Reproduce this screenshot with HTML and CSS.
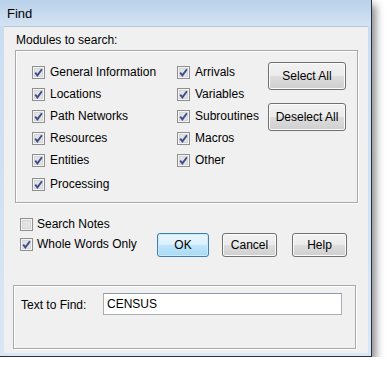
FILE: index.html
```html
<!DOCTYPE html>
<html lang="en">
<head>
  <meta charset="UTF-8" />
  <title>Find</title>
  <link rel="stylesheet" href="styles.css">
</head>
<body>
  <div class="window">
    <div class="titlebar">Find</div>

    <div class="client">
      <div class="group-label">Modules to search:</div>

      <div class="group modules">
        <div class="col col-a">
          <label class="check"><svg class="box" viewBox="0 0 13 13"><rect x="0.5" y="0.5" width="12" height="12" class="b-out"/><rect x="2.5" y="2.5" width="8" height="8" class="b-in"/><path d="M3.2 6.6 L5.4 9.4 L9.9 3.2" class="tick"/></svg>General Information</label>
          <label class="check"><svg class="box" viewBox="0 0 13 13"><rect x="0.5" y="0.5" width="12" height="12" class="b-out"/><rect x="2.5" y="2.5" width="8" height="8" class="b-in"/><path d="M3.2 6.6 L5.4 9.4 L9.9 3.2" class="tick"/></svg>Locations</label>
          <label class="check"><svg class="box" viewBox="0 0 13 13"><rect x="0.5" y="0.5" width="12" height="12" class="b-out"/><rect x="2.5" y="2.5" width="8" height="8" class="b-in"/><path d="M3.2 6.6 L5.4 9.4 L9.9 3.2" class="tick"/></svg>Path Networks</label>
          <label class="check"><svg class="box" viewBox="0 0 13 13"><rect x="0.5" y="0.5" width="12" height="12" class="b-out"/><rect x="2.5" y="2.5" width="8" height="8" class="b-in"/><path d="M3.2 6.6 L5.4 9.4 L9.9 3.2" class="tick"/></svg>Resources</label>
          <label class="check"><svg class="box" viewBox="0 0 13 13"><rect x="0.5" y="0.5" width="12" height="12" class="b-out"/><rect x="2.5" y="2.5" width="8" height="8" class="b-in"/><path d="M3.2 6.6 L5.4 9.4 L9.9 3.2" class="tick"/></svg>Entities</label>
          <label class="check last"><svg class="box" viewBox="0 0 13 13"><rect x="0.5" y="0.5" width="12" height="12" class="b-out"/><rect x="2.5" y="2.5" width="8" height="8" class="b-in"/><path d="M3.2 6.6 L5.4 9.4 L9.9 3.2" class="tick"/></svg>Processing</label>
        </div>

        <div class="col col-b">
          <label class="check"><svg class="box" viewBox="0 0 13 13"><rect x="0.5" y="0.5" width="12" height="12" class="b-out"/><rect x="2.5" y="2.5" width="8" height="8" class="b-in"/><path d="M3.2 6.6 L5.4 9.4 L9.9 3.2" class="tick"/></svg>Arrivals</label>
          <label class="check"><svg class="box" viewBox="0 0 13 13"><rect x="0.5" y="0.5" width="12" height="12" class="b-out"/><rect x="2.5" y="2.5" width="8" height="8" class="b-in"/><path d="M3.2 6.6 L5.4 9.4 L9.9 3.2" class="tick"/></svg>Variables</label>
          <label class="check"><svg class="box" viewBox="0 0 13 13"><rect x="0.5" y="0.5" width="12" height="12" class="b-out"/><rect x="2.5" y="2.5" width="8" height="8" class="b-in"/><path d="M3.2 6.6 L5.4 9.4 L9.9 3.2" class="tick"/></svg>Subroutines</label>
          <label class="check"><svg class="box" viewBox="0 0 13 13"><rect x="0.5" y="0.5" width="12" height="12" class="b-out"/><rect x="2.5" y="2.5" width="8" height="8" class="b-in"/><path d="M3.2 6.6 L5.4 9.4 L9.9 3.2" class="tick"/></svg>Macros</label>
          <label class="check"><svg class="box" viewBox="0 0 13 13"><rect x="0.5" y="0.5" width="12" height="12" class="b-out"/><rect x="2.5" y="2.5" width="8" height="8" class="b-in"/><path d="M3.2 6.6 L5.4 9.4 L9.9 3.2" class="tick"/></svg>Other</label>
        </div>

        <div class="col col-btn">
          <button class="btn tall">Select All</button>
          <button class="btn tall">Deselect All</button>
        </div>
      </div>

      <div class="options">
        <div class="opt-checks">
          <label class="check small"><svg class="box" viewBox="0 0 13 13"><rect x="0.5" y="0.5" width="12" height="12" class="b-out"/><rect x="2.5" y="2.5" width="8" height="8" class="b-in"/></svg>Search Notes</label>
          <label class="check small"><svg class="box" viewBox="0 0 13 13"><rect x="0.5" y="0.5" width="12" height="12" class="b-out"/><rect x="2.5" y="2.5" width="8" height="8" class="b-in"/><path d="M3.2 6.6 L5.4 9.4 L9.9 3.2" class="tick"/></svg>Whole Words Only</label>
        </div>
        <div class="actions">
          <button class="btn default ok">OK</button>
          <button class="btn cancel">Cancel</button>
          <button class="btn help">Help</button>
        </div>
      </div>

      <div class="group find">
        <span class="find-label">Text to Find:</span>
        <input class="find-input" type="text" value="CENSUS" />
      </div>
    </div>
  </div>
</body>
</html>
```

FILE: styles.css
```css
body {
  margin: 0;
  padding: 0;
  background: #ffffff;
  font-family: 'Liberation Sans', Arial, sans-serif;
  font-size: 12px;
  color: #000;
}

.window {
  box-sizing: border-box;
  width: 372px;
  height: 357px;
  padding: 0 3px 3px 4px;
  background: linear-gradient(#c9dcf0, #d9e6f4);
  border-right: 1px solid #26333f;
  border-bottom: 1px solid #26333f;
  box-shadow: 4px 5px 8px rgba(0, 0, 0, 0.45);
  display: flex;
  flex-direction: column;
}

.titlebar {
  height: 26px;
  line-height: 27px;
  font-size: 13px;
  color: #000;
  background: linear-gradient(#b9d1ea, #d4e3f3);
  margin: 0 -3px 0 -4px;
  padding-left: 7px;
}

.client {
  flex-grow: 1;
  background: #f0f0f0;
  border-top: 1px solid #b3c6dc;
  padding: 6px 0 0 9px;
}

.group-label {
  line-height: 15px;
  margin-left: 3px;
  margin-bottom: 2px;
}

.group {
  box-sizing: border-box;
  border: 1px solid #a8a8a8;
  box-shadow: inset 1px 1px 0 #fff, 1px 1px 0 #fff;
}

.modules {
  width: 343px;
  height: 153px;
  margin-left: 2px;
  display: flex;
  padding: 10px 0 0 16px;
}

.col {
  display: flex;
  flex-direction: column;
}

.col-a {
  width: 145px;
}

.col-b {
  width: 91px;
}

.check {
  display: flex;
  align-items: center;
  height: 22px;
  white-space: nowrap;
}

.check.last {
  margin-top: 2px;
}

.check.small {
  height: 20px;
}

.box {
  width: 13px;
  height: 13px;
  margin-right: 5px;
  flex-shrink: 0;
}

.b-out {
  fill: #f4f4f4;
  stroke: #8f8f8f;
}

.b-in {
  fill: #e3e3e3;
  stroke: #d6d6d6;
}

.tick {
  fill: none;
  stroke: #3b4f8d;
  stroke-width: 1.9;
}

.btn {
  box-sizing: border-box;
  font-family: 'Liberation Sans', Arial, sans-serif;
  font-size: 12px;
  color: #000;
  border: 1px solid #707070;
  border-radius: 3px;
  background: linear-gradient(#f2f2f2 0%, #ebebeb 50%, #dddddd 51%, #cfcfcf 100%);
  box-shadow: inset 0 0 0 1px #fbfbfb;
  padding: 0;
  height: 24px;
}

.tall {
  width: 78px;
  height: 28px;
}

.col-btn {
  gap: 13px;
  padding-top: 1px;
}

.options {
  display: flex;
  padding-top: 11px;
  height: 82px;
  box-sizing: border-box;
}

.opt-checks {
  width: 137px;
  padding-left: 7px;
  display: flex;
  flex-direction: column;
}

.opt-checks .box {
  margin-right: 4px;
}

.actions {
  display: flex;
  padding-top: 19px;
  align-items: flex-start;
}

.default {
  border-color: #3c7fb1;
  background: linear-gradient(#eaf6fd 0%, #d9f0fc 50%, #bee6fd 51%, #a7d9f5 100%);
  box-shadow: inset 0 0 0 1px #cdeafb;
}

.ok {
  width: 52px;
  margin-right: 13px;
}

.cancel {
  width: 55px;
  margin-right: 15px;
}

.help {
  width: 55px;
}

.find {
  width: 343px;
  height: 64px;
  display: flex;
  align-items: flex-start;
  padding: 7px 0 0 7px;
}

.find-label {
  width: 82px;
  line-height: 22px;
  padding-top: 1px;
}

.find-input {
  box-sizing: border-box;
  width: 239px;
  height: 22px;
  border: 1px solid #abadb3;
  border-top-color: #8a9bb0;
  font-family: 'Liberation Sans', Arial, sans-serif;
  font-size: 12px;
  padding: 0 3px;
  margin: 0;
  background: #fff;
}
```
